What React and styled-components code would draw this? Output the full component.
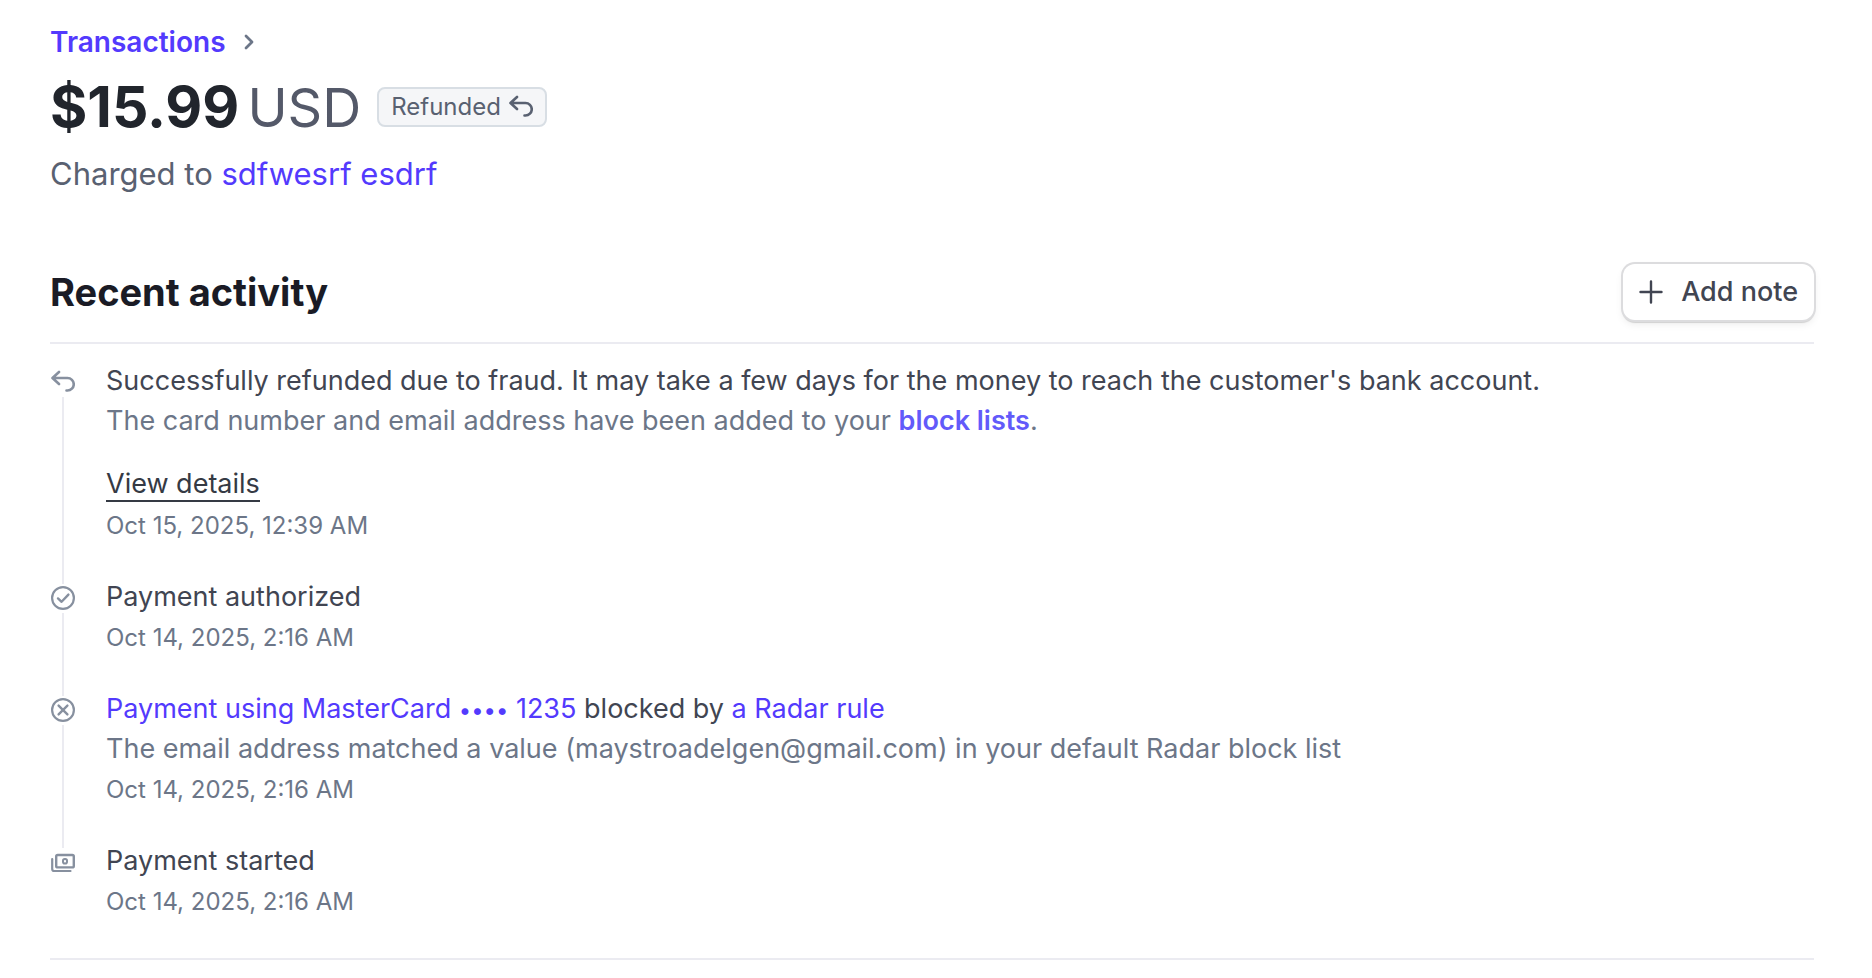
import React from 'react'
import styled, { createGlobalStyle } from 'styled-components'

const GlobalStyle = createGlobalStyle`
    * {
        box-sizing: border-box;
    }

    body {
        margin: 0;
        background: #ffffff;
        color: #414552;
        font-family: Inter, "Liberation Sans", sans-serif;
        font-size: 27px;
        line-height: 40px;
    }
`

const Page = styled.main`
    padding: 22px 58px 16px 50px;
`

const Link = styled.a`
    color: ${props => props.$soft ? '#625afa' : '#533afd'};
    font-weight: ${props => props.$strong ? 600 : 400};
    text-decoration: none;
`

const Breadcrumb = styled.nav`
    display: flex;
    align-items: center;
    gap: 18px;
    font-size: 28px;
`

const TitleRow = styled.div`
    display: flex;
    align-items: center;
    gap: 16px;
    margin-top: 13px;
`

const Amount = styled.h1`
    display: flex;
    align-items: baseline;
    gap: 8px;
    margin: 0;
    color: #21252c;
    font-size: 57px;
    font-weight: 700;
    line-height: 64px;
`

const Currency = styled.span`
    color: #545969;
    font-size: 54px;
    font-weight: 400;
    line-height: 1;
`

const Badge = styled.span`
    display: flex;
    align-items: center;
    gap: 8px;
    height: 40px;
    padding: 0 12px;
    border: 2px solid #d8dee4;
    border-radius: 8px;
    background: #f5f6f8;
    color: #596171;
    font-size: 24px;
    line-height: 36px;
`

const Charged = styled.p`
    margin: 13px 0 0;
    color: #596171;
    font-size: 31px;
    line-height: 44px;
`

const SectionHeader = styled.header`
    display: flex;
    align-items: center;
    justify-content: space-between;
    margin-top: 68px;
    padding-bottom: 22px;
    border-bottom: 2px solid #ebebf1;

    h2 {
        margin: 0;
        color: #1a1b25;
        font-size: 38px;
        font-weight: 700;
        line-height: 48px;
    }
`

const Button = styled.button`
    display: flex;
    align-items: center;
    gap: 18px;
    height: 56px;
    padding: 0 16px;
    border: 0;
    border-radius: 12px;
    background: #ffffff;
    box-shadow: 0 0 0 2px #dcdcde, 0 2px 1px 1px rgba(0, 0, 0, 0.14), 0 4px 8px rgba(0, 0, 0, 0.08);
    color: #414552;
    font: inherit;
    font-weight: 500;
    cursor: pointer;
`

const Timeline = styled.ol`
    margin: 0;
    padding: 17px 0 5px;
    border-bottom: 2px solid #ebebf1;
    list-style: none;
`

const Item = styled.li`
    display: flex;
    gap: 30px;
`

const Rail = styled.div`
    display: flex;
    flex-direction: column;
    align-items: center;
    width: 26px;
    padding-top: 9px;
    color: #87909f;
`

const Line = styled.div`
    flex: 1;
    width: 2px;
    margin: 3px 0 -7px;
    background: #ebebf1;
`

const Content = styled.div`
    padding-bottom: 30px;
`

const Text = styled.p`
    margin: 0;
    color: ${props => props.$muted ? '#6c7688' : '#414552'};
`

const Dots = styled.span`
    font-size: 22px;
    line-height: 1;
`

const DetailsButton = styled.button`
    display: block;
    height: 38px;
    margin: 23px 0 3px;
    padding: 0;
    border: 0;
    border-bottom: 2px solid #353a44;
    background: none;
    color: #353a44;
    font: inherit;
    cursor: pointer;
`

const Time = styled.time`
    display: block;
    color: #6c7688;
    font-size: 24px;
    line-height: 42px;
`

const Svg = ({ size = 24, children, ...rest }) => (
    <svg
        width={size}
        height={size}
        viewBox='0 0 24 24'
        fill='none'
        stroke='currentColor'
        strokeWidth='2.6'
        strokeLinecap='round'
        strokeLinejoin='round'
        aria-hidden='true'
        {...rest}
    >
        {children}
    </svg>
)

const RefundIcon = () => (
    <Svg>
        <path d='M8 2L1.5 8L8 14M2 8H16.5a6.2 6.2 0 0 1 0 12.5H15.5' />
    </Svg>
)

const CheckIcon = () => (
    <Svg strokeWidth='2.2'>
        <circle cx='12' cy='12' r='10.9' />
        <path d='M7 12.4L10.6 15.8L17.4 8.6' strokeWidth='2.4' />
    </Svg>
)

const CancelIcon = () => (
    <Svg strokeWidth='2.2'>
        <circle cx='12' cy='12' r='10.9' />
        <path d='M7.6 7.6L16.4 16.4M16.4 7.6L7.6 16.4' strokeWidth='2.4' />
    </Svg>
)

const CashIcon = () => (
    <Svg strokeWidth='2.4'>
        <rect x='5.2' y='5' width='17.6' height='12.4' rx='1.5' />
        <rect x='12' y='9' width='4' height='4.6' rx='1.8' strokeWidth='2' />
        <path d='M1.2 9V19A2 2 0 0 0 3.2 21H19.5' strokeWidth='2.2' />
    </Svg>
)

const ChevronIcon = () => (
    <svg width='12' height='18' viewBox='0 0 12 18' fill='none' stroke='#6c7688' strokeWidth='2.8' strokeLinecap='round' strokeLinejoin='round' aria-hidden='true'>
        <path d='M2 3L8 9L2 15' />
    </svg>
)

const PlusIcon = () => (
    <Svg strokeWidth='2.4'>
        <path d='M12 1.5V22.5M1.5 12H22.5' />
    </Svg>
)

const activity = [
    {
        id: 'refunded',
        icon: <RefundIcon />,
        title: "Successfully refunded due to fraud. It may take a few days for the money to reach the customer's bank account.",
        note: <>The card number and email address have been added to your <Link href='#block-lists' $strong $soft>block lists</Link>.</>,
        details: true,
        time: 'Oct 15, 2025, 12:39 AM'
    },
    {
        id: 'authorized',
        icon: <CheckIcon />,
        title: 'Payment authorized',
        time: 'Oct 14, 2025, 2:16 AM'
    },
    {
        id: 'blocked',
        icon: <CancelIcon />,
        title: <><Link href='#payment'>Payment using MasterCard <Dots>••••</Dots> 1235</Link> blocked by <Link href='#rule'>a Radar rule</Link></>,
        note: 'The email address matched a value (maystroadelgen@gmail.com) in your default Radar block list',
        time: 'Oct 14, 2025, 2:16 AM'
    },
    {
        id: 'started',
        icon: <CashIcon />,
        title: 'Payment started',
        time: 'Oct 14, 2025, 2:16 AM'
    }
]

const App = () => {
    const items = activity.map((item, index) => {
        return (
        <Item key={item.id}>
            <Rail>
                {item.icon}
                {index < activity.length - 1 && <Line />}
            </Rail>
            <Content>
                <Text>{item.title}</Text>
                {item.note && <Text $muted>{item.note}</Text>}
                {item.details && <DetailsButton type='button'>View details</DetailsButton>}
                <Time>{item.time}</Time>
            </Content>
        </Item>)
    })

    return (
        <>
            <GlobalStyle />
            <Page>
                <Breadcrumb aria-label='Breadcrumb'>
                    <Link href='#transactions' $strong>Transactions</Link>
                    <ChevronIcon />
                </Breadcrumb>
                <TitleRow>
                    <Amount>$15.99 <Currency>USD</Currency></Amount>
                    <Badge>Refunded <RefundIcon /></Badge>
                </TitleRow>
                <Charged>Charged to <Link href='#customer'>sdfwesrf esdrf</Link></Charged>
                <SectionHeader>
                    <h2>Recent activity</h2>
                    <Button type='button'><PlusIcon />Add note</Button>
                </SectionHeader>
                <Timeline>{items}</Timeline>
            </Page>
        </>
    )
}

export default App
